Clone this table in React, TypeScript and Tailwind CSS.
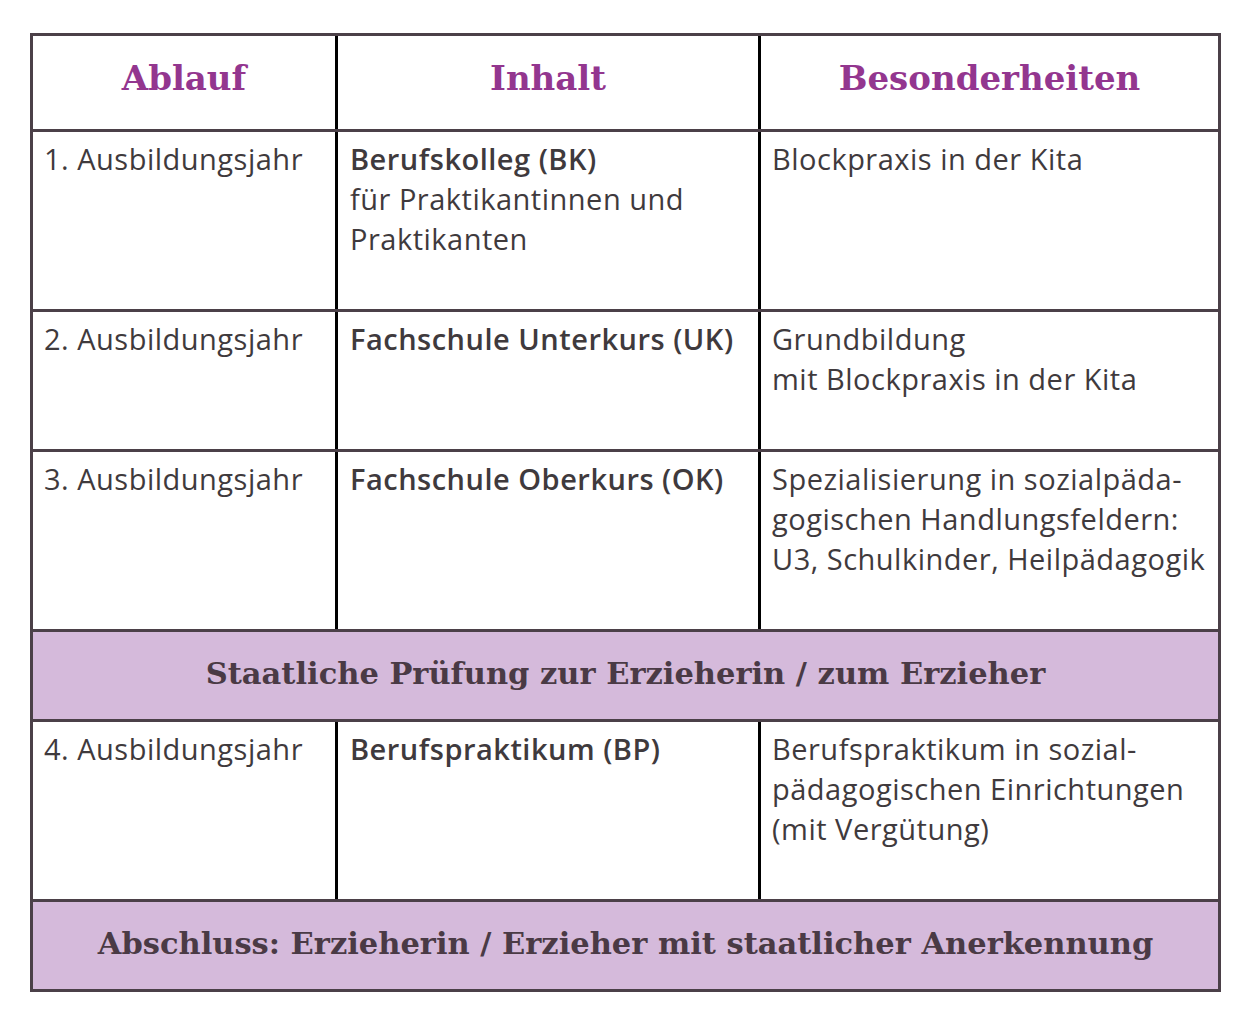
import React from 'react'

const body = { fontFamily: '"Open Sans", "Noto Sans", sans-serif' }
const serif = { fontFamily: '"DejaVu Serif", "Liberation Serif", serif' }

type Row = { year: string; title: string; sub?: string[]; notes: string[]; h: string }

const rows1: Row[] = [
  {
    year: '1. Ausbildungsjahr',
    title: 'Berufskolleg (BK)',
    sub: ['für Praktikantinnen und', 'Praktikanten'],
    notes: ['Blockpraxis in der Kita'],
    h: 'h-[180px]',
  },
  {
    year: '2. Ausbildungsjahr',
    title: 'Fachschule Unterkurs (UK)',
    notes: ['Grundbildung', 'mit Blockpraxis in der Kita'],
    h: 'h-[140px]',
  },
  {
    year: '3. Ausbildungsjahr',
    title: 'Fachschule Oberkurs (OK)',
    notes: ['Spezialisierung in sozialpäda-', 'gogischen Handlungsfeldern:', 'U3, Schulkinder, Heilpädagogik'],
    h: 'h-[180px]',
  },
]

const row4: Row = {
  year: '4. Ausbildungsjahr',
  title: 'Berufspraktikum (BP)',
  notes: ['Berufspraktikum in sozial-', 'pädagogischen Einrichtungen', '(mit Vergütung)'],
  h: 'h-[180px]',
}

function DataRow({ row }: { row: Row }) {
  return (
    <div
      className={`grid grid-cols-[302px_423px_1fr] border-b-[3px] border-[#4b4048] text-[29px] leading-[40px] tracking-[0.5px] text-[#3f3a3d] ${row.h}`}
      style={body}
    >
      <div className="whitespace-nowrap pl-[11px] pt-[7px]">{row.year}</div>
      <div className="whitespace-nowrap border-l-[3px] border-black pl-[12px] pt-[7px]">
        <div className="font-semibold">{row.title}</div>
        {row.sub?.map((s) => (
          <div key={s}>{s}</div>
        ))}
      </div>
      <div className="whitespace-nowrap border-l-[3px] border-black pl-[11px] pt-[7px]">
        {row.notes.map((n) => (
          <div key={n}>{n}</div>
        ))}
      </div>
    </div>
  )
}

function Band({ text, h, last }: { text: string; h: string; last?: boolean }) {
  return (
    <div
      className={`flex items-center justify-center bg-[#d5badb] pb-[4px] text-[30.5px] font-bold text-[#4a3a45] ${h} ${last ? '' : 'border-b-[3px] border-[#4b4048]'}`}
      style={serif}
    >
      {text}
    </div>
  )
}

export default function App() {
  return (
    <div className="min-h-screen bg-white pl-[30px] pt-[33px]">
      <div className="w-[1191px] border-[3px] border-[#4b4048]">
        {/* Header */}
        <div
          className="grid h-[96px] grid-cols-[302px_423px_1fr] border-b-[3px] border-[#4b4048] pb-[8px] text-[34px] font-bold text-[#93368f]"
          style={serif}
        >
          <div className="flex items-center justify-center">Ablauf</div>
          <div className="-mb-[8px] flex items-center justify-center border-l-[3px] border-black pb-[8px]">Inhalt</div>
          <div className="-mb-[8px] flex items-center justify-center border-l-[3px] border-black pb-[8px]">Besonderheiten</div>
        </div>

        {rows1.map((r) => (
          <DataRow key={r.year} row={r} />
        ))}

        <Band text="Staatliche Prüfung zur Erzieherin / zum Erzieher" h="h-[90px]" />

        <DataRow row={row4} />

        <Band text="Abschluss: Erzieherin / Erzieher mit staatlicher Anerkennung" h="h-[87px]" last />
      </div>
    </div>
  )
}
